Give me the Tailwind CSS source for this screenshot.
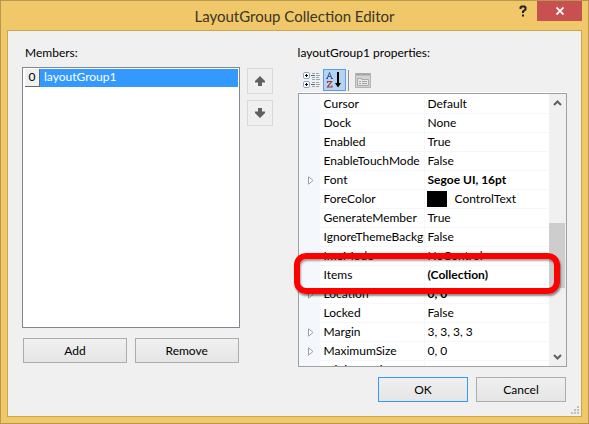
<!DOCTYPE html>
<html lang="en">
<head>
<meta charset="utf-8">
<title>LayoutGroup Collection Editor</title>
<script src="https://cdn.jsdelivr.net/npm/@tailwindcss/browser@4"></script>
</head>
<body class="font-['Lato','Open_Sans',sans-serif] text-[12px] leading-4 text-black">
<div class="flex h-screen flex-col border border-[#b8974f] bg-[#f0c869] px-1.5 pb-1.5">
  <header class="relative flex h-[29px] shrink-0 items-center justify-center">
    <h1 class="text-[15px] leading-5 text-[#3c3523]">LayoutGroup Collection Editor</h1>
    <div class="absolute top-0 right-0 flex items-start">
      <button aria-label="Help" class="flex h-5 w-[28px] items-center justify-center">
        <svg class="h-3 w-2" viewBox="0 0 8 12" fill="none" stroke="#222" stroke-width="2"><path d="M1.500 4V2.500L2.500 1.500H5.500L6.500 2.500V4.500L4 6.500V8M4 9.500V11.500"/></svg>
      </button>
      <button aria-label="Close" class="flex h-5 w-[45px] items-center justify-center bg-[#c75050]">
        <svg class="h-2 w-2" viewBox="0 0 8 8" fill="none" stroke="#fff" stroke-width="1.8"><path d="M.5 .5L7.500 7.500M7.500 .5L.5 7.500"/></svg>
      </button>
    </div>
  </header>

  <main class="relative flex min-h-0 flex-1 flex-col border border-[#caa550] bg-[#f0f0f0] p-3.5">
    <div class="flex min-h-0 flex-1">
      <section class="flex min-w-0 flex-[218] flex-col">
        <h2 id="members" class="mb-1.5 pl-[3px]">Members:</h2>
        <ul role="listbox" aria-labelledby="members" class="h-[261px] shrink-0 border border-[#828790] bg-white p-px pl-0.5">
          <li role="option" aria-selected="true" class="flex h-[18px]">
            <span class="w-[15px] border-r border-b border-[#696969] bg-[#f0f0f0] text-center">0</span>
            <span class="flex-1 bg-[#3399ff] pl-1 text-white">layoutGroup1</span>
          </li>
        </ul>
        <div class="mt-2.5 flex gap-2 px-px">
          <button class="h-[25px] flex-1 border border-[#acacac] bg-linear-to-b from-[#f0f0f0] to-[#e5e5e5]">Add</button>
          <button class="h-[25px] flex-1 border border-[#acacac] bg-linear-to-b from-[#f0f0f0] to-[#e5e5e5]">Remove</button>
        </div>
      </section>

      <div class="mt-[23px] mr-[25px] ml-[7px] flex w-[26px] shrink-0 flex-col gap-1.5">
        <button aria-label="Move up" class="flex h-[26px] items-center justify-center border border-[#d9d9d9] bg-[#efefef]">
          <svg class="h-2.5 w-2.5" viewBox="0 0 10 10" fill="#606060"><path d="M5 0L10 5V6.500H7V10H3V6.500H0V5Z"/></svg>
        </button>
        <button aria-label="Move down" class="flex h-[26px] items-center justify-center border border-[#d9d9d9] bg-[#efefef]">
          <svg class="h-2.5 w-2.5" viewBox="0 0 10 10" fill="#606060"><path d="M5 10L10 5V3.500H7V0H3V3.500H0V5Z"/></svg>
        </button>
      </div>

      <section class="flex min-w-0 flex-[270] flex-col">
        <h2>layoutGroup1 properties:</h2>
        <div role="toolbar" aria-label="Property view" class="mt-2 flex h-6 items-start border-b border-white pl-0.5">
          <button aria-label="Categorized" class="flex h-[22px] w-[23px] items-center justify-center">
            <svg class="h-4 w-[17px]" viewBox="0 0 17 16" fill="none">
              <rect x=".5" y=".5" width="6" height="6" rx="1.500" fill="#fff" stroke="#8aa5cc"/><rect x=".5" y="9.500" width="6" height="6" rx="1.500" fill="#fff" stroke="#8aa5cc"/>
              <path d="M2 3.500H5M3.500 2V5M2 12.500H5M3.500 11V14" stroke="#000"/>
              <path d="M8 3.500H12M8 12.500H12" stroke="#666"/>
              <path d="M9 1.500H12M9 5.500H12M9 7.500H12M9 10.500H12M9 14.500H12M13 1.500H16M13 3.500H17M13 5.500H16M13 7.500H17M13 10.500H16M13 12.500H17M13 14.500H16" stroke="#96a3b8"/>
            </svg>
          </button>
          <button aria-label="Alphabetical" aria-pressed="true" class="flex h-[22px] w-[23px] items-center justify-center border border-[#5c9ee2] bg-[#b5d4f2]">
            <svg class="h-4 w-4" viewBox="0 0 16 16" fill="none">
              <path d="M1 7L3.500 .5L6 7M2 4.500H5M0 6.500H2M5 6.500H7" stroke="#3850a0"/>
              <path d="M1.500 11V9.500H5.500L1.500 15H6V13.500" stroke="#a03838" stroke-width="1.200"/>
              <path d="M12 0V13" stroke="#000" stroke-width="2"/><path d="M9 11H15L12 15.500Z" fill="#000"/>
            </svg>
          </button>
          <span class="mx-0.5 mt-px h-[21px] w-px bg-[#8c8c8c]"></span>
          <button aria-label="Property pages" disabled class="flex h-[22px] w-6 items-center justify-center">
            <svg class="h-[15px] w-4" viewBox="0 0 16 15" fill="none">
              <rect x=".5" y=".5" width="15" height="14" fill="#d3d3d3" stroke="#b4b4b4"/><path d="M1 1.500H15" stroke="#a5a5a5" stroke-width="2"/>
              <path d="M2.500 12.500V5.500H6.500V6.500H13.500V12.500Z" fill="#e8e8e8" stroke="#aaa"/><path d="M4 8.500H6M7 8.500H12M4 10.500H6M7 10.500H12" stroke="#a5a5a5"/>
            </svg>
          </button>
        </div>

        <div class="relative flex h-[274px] shrink-0 border border-[#a0a0a0] bg-white">
          <div class="min-w-0 flex-1 overflow-hidden bg-linear-to-r from-[#f4f7fc] from-[21px] to-white to-[21px] pt-px">
            <table class="w-full table-fixed border-separate border-spacing-0 [&_td]:h-[19px] [&_td]:overflow-hidden [&_td]:border-b [&_td]:border-[#f4f7fc] [&_td]:p-0 [&_td]:pl-[3px] [&_td]:leading-4 [&_td]:whitespace-nowrap [&_th]:h-[19px] [&_th]:overflow-hidden [&_th]:border-r [&_th]:border-b [&_th]:border-[#f4f7fc] [&_th]:p-0 [&_th]:pl-[3px] [&_th]:text-left [&_th]:leading-4 [&_th]:font-normal [&_th]:whitespace-nowrap">
              <colgroup><col class="w-[22px]"><col class="w-[104px]"><col></colgroup>
              <tbody>
                <tr><td></td><th scope="row">Cursor</th><td>Default</td></tr>
                <tr><td></td><th scope="row">Dock</th><td>None</td></tr>
                <tr><td></td><th scope="row">Enabled</th><td>True</td></tr>
                <tr><td></td><th scope="row">EnableTouchMode</th><td>False</td></tr>
                <tr><td><svg class="ml-1.5 h-[9px] w-1.5" viewBox="0 0 6 9" fill="#fff" stroke="#a0a0a0"><path d="M.5 .8V8.200L5 4.500Z"/></svg></td><th scope="row">Font</th><td class="font-bold">Segoe UI, 16pt</td></tr>
                <tr><td></td><th scope="row">ForeColor</th><td><div class="flex items-center gap-2"><span class="-ml-px h-4 w-5 bg-black"></span>ControlText</div></td></tr>
                <tr><td></td><th scope="row">GenerateMember</th><td>True</td></tr>
                <tr><td></td><th scope="row">IgnoreThemeBackground</th><td>False</td></tr>
                <tr><td></td><th scope="row">ImeMode</th><td>NoControl</td></tr>
                <tr><td></td><th scope="row">Items</th><td class="font-bold">(Collection)</td></tr>
                <tr><td><svg class="ml-1.5 h-[9px] w-1.5" viewBox="0 0 6 9" fill="#fff" stroke="#a0a0a0"><path d="M.5 .8V8.200L5 4.500Z"/></svg></td><th scope="row">Location</th><td class="font-bold">0, 0</td></tr>
                <tr><td></td><th scope="row">Locked</th><td>False</td></tr>
                <tr><td><svg class="ml-1.5 h-[9px] w-1.5" viewBox="0 0 6 9" fill="#fff" stroke="#a0a0a0"><path d="M.5 .8V8.200L5 4.500Z"/></svg></td><th scope="row">Margin</th><td>3, 3, 3, 3</td></tr>
                <tr><td><svg class="ml-1.5 h-[9px] w-1.5" viewBox="0 0 6 9" fill="#fff" stroke="#a0a0a0"><path d="M.5 .8V8.200L5 4.500Z"/></svg></td><th scope="row">MaximumSize</th><td>0, 0</td></tr>
                <tr><td></td><th scope="row">MinimumSize</th><td>0, 0</td></tr>
              </tbody>
            </table>
          </div>
          <div class="flex w-[17px] shrink-0 flex-col items-center bg-[#f0f0f0] pr-px">
            <svg class="mt-1.5 h-1.5 w-[9px]" viewBox="0 0 9 6" fill="none" stroke="#606060" stroke-width="2"><path d="M1 5L4.500 1.500L8 5"/></svg>
            <div class="flex-[117]"></div>
            <div class="h-[65px] w-full bg-[#cdcdcd]"></div>
            <div class="flex-[66]"></div>
            <svg class="mb-1.5 h-1.5 w-[9px]" viewBox="0 0 9 6" fill="none" stroke="#606060" stroke-width="2"><path d="M1 1L4.500 4.500L8 1"/></svg>
          </div>
          <div class="pointer-events-none absolute top-[159px] right-1.5 -left-[5px] h-[41px] rounded-xl border-6 border-[#ff0000] shadow-[1px_2px_2px_rgba(0,0,0,0.45),inset_1px_2px_2px_rgba(0,0,0,0.35)]"></div>
        </div>
      </section>
    </div>

    <footer class="flex shrink-0 justify-end gap-2 pr-px">
      <button class="h-[25px] w-[90px] border border-[#3399ff] bg-linear-to-b from-[#f0f0f0] to-[#e5e5e5]">OK</button>
      <button class="h-[25px] w-[90px] border border-[#acacac] bg-linear-to-b from-[#f0f0f0] to-[#e5e5e5]">Cancel</button>
    </footer>
    <svg class="absolute right-0.5 bottom-0.5 h-2 w-2" viewBox="0 0 8 8" fill="#bfbfbf"><path d="M6 0h2v2H6zM3 3h2v2H3zM6 3h2v2H6zM0 6h2v2H0zM3 6h2v2H3zM6 6h2v2H6z"/></svg>
  </main>
</div>
</body>
</html>
